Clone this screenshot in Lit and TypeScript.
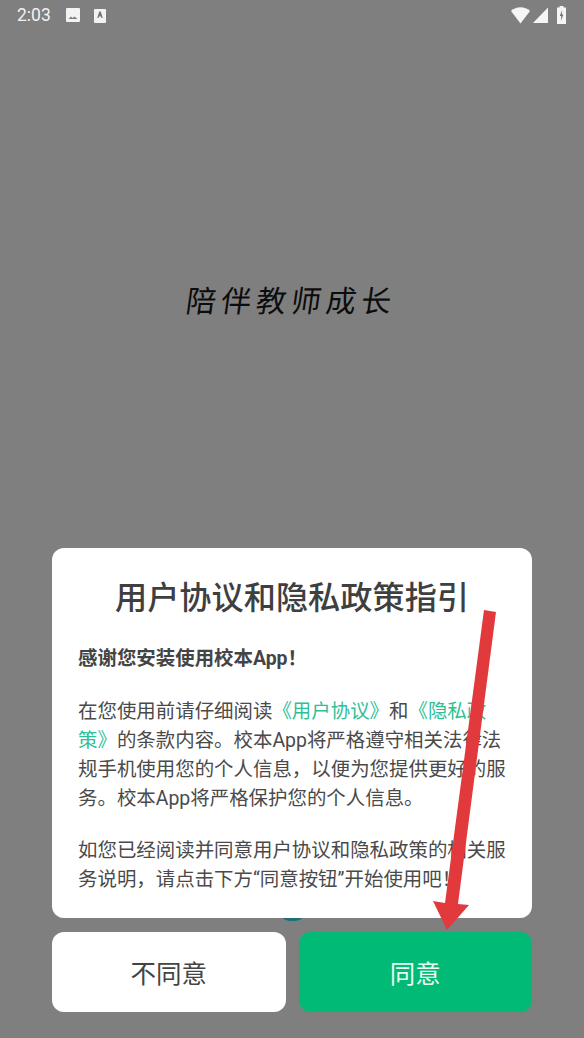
import { LitElement, html, css } from "lit";
import { customElement } from "lit/decorators.js";

@customElement("app-root")
export class AppRoot extends LitElement {
  static styles = css`
    :host {
      display: block;
      position: relative;
      width: 584px;
      height: 1038px;
      overflow: hidden;
      background: #7f7f7f;
      font-family: Roboto, "Noto Sans CJK SC", sans-serif;
      color: #444;
    }
    .status {
      height: 32px;
      display: flex;
      align-items: center;
      padding: 0 18px 2px 17px;
      color: #f2f2f2;
      box-sizing: border-box;
    }
    .time { font-size: 17.5px; width: 49px; }
    .status svg { display: block; }
    .ic2 { margin-left: 14px; }
    .spacer { flex: 1; }
    .sig { margin-left: 3px; }
    .batt { margin-left: 9px; }
    .slogan {
      margin-top: 246px;
      height: 42px;
      display: flex;
      justify-content: center;
      align-items: center;
      gap: 5px;
      padding-right: 6px;
      font-size: 30px;
      font-weight: 400;
      color: #0c0c0c;
      transform: skewX(-8deg);
      font-family: "Noto Sans CJK SC", sans-serif;
      line-height: 42px;
    }
    .dialog {
      position: relative;
      margin: 228px 52px 0;
    }
    .blob {
      position: absolute;
      left: 226px;
      top: 360px;
      width: 29px;
      height: 13px;
      border-radius: 0 0 14px 14px;
      background: #1c6f72;
    }
    .card {
      position: relative;
      height: 370px;
      box-sizing: border-box;
      background: #fff;
      border-radius: 12px;
      padding: 27px 24px 0 26px;
    }
    h1 {
      margin: 0 0 23px;
      text-align: center;
      font-size: 32.2px;
      line-height: 46px;
      font-weight: 500;
      color: #3f3f3f;
      transform: translateX(-1px);
    }
    p {
      margin: 0 0 23.5px;
      font-size: 19.45px;
      line-height: 29px;
      color: #4a4a4a;
    }
    .lead { font-weight: 700; color: #444; }
    .link { color: #2fbf97; }
    .actions {
      display: grid;
      grid-template-columns: 1fr 1fr;
      gap: 13px;
      margin-top: 14px;
    }
    .btn {
      height: 80px;
      border-radius: 12px;
      display: flex;
      align-items: center;
      justify-content: center;
      padding-bottom: 2px;
      box-sizing: border-box;
      font-size: 25.5px;
      background: #fff;
      color: #444;
    }
    .btn.ok { background: #00ba75; color: #e9fbf3; }
    .arrow { position: absolute; left: 0; top: 0; pointer-events: none; }
  `;

  render() {
    return html`
      <div class="status">
        <span class="time">2:03</span>
        <svg width="14" height="16" viewBox="0 0 14 16">
          <rect y="1" width="14" height="14" rx="1" fill="#f2f2f2"></rect>
          <path d="M2.5 12 L5 9.5 L6.5 11 L8.5 9.5 L11.5 12 Z" fill="#7f7f7f"></path>
        </svg>
        <svg class="ic2" width="12" height="15" viewBox="0 0 12 15">
          <rect y="1" width="12" height="14" rx="1" fill="#f2f2f2"></rect>
          <path d="M3.2 10 L5.2 3.5 H6.8 L8.8 10 H7.5 L7.1 8.6 H4.9 L4.5 10 Z" fill="#777"></path>
        </svg>
        <span class="spacer"></span>
        <svg width="19" height="17" viewBox="0 0 19 17">
          <path d="M0 4 C5 -1 14 -1 19 4 L9.5 16.5 Z" fill="#f5f5f5"></path>
        </svg>
        <svg class="sig" width="15" height="16" viewBox="0 0 15 16">
          <path d="M0 16 L15 0.5 V16 Z" fill="#f5f5f5"></path>
        </svg>
        <svg class="batt" width="9" height="18" viewBox="0 0 9 18">
          <path d="M2.5 0 H6.5 V1.5 H9 V18 H0 V1.5 H2.5 Z" fill="#f5f5f5"></path>
          <path d="M5.2 4 L2.8 10 H4.3 L3.8 15 L6.4 8.4 H4.8 Z" fill="#6e6e6e"></path>
        </svg>
      </div>

      <div class="slogan">
        <span>陪</span><span>伴</span><span>教</span><span>师</span><span>成</span><span>长</span>
      </div>

      <div class="dialog">
        <div class="blob"></div>
        <div class="card">
          <h1>用户协议和隐私政策指引</h1>
          <p class="lead">感谢您安装使用校本App！</p>
          <p>在您使用前请仔细阅读<span class="link">《用户协议》</span>和<span class="link">《隐私政策》</span>的条款内容。校本App将严格遵守相关法律法规手机使用您的个人信息，以便为您提供更好的服务。校本App将严格保护您的个人信息。</p>
          <p>如您已经阅读并同意用户协议和隐私政策的相关服务说明，请点击下方“同意按钮”开始使用吧！</p>
        </div>
        <div class="actions">
          <div class="btn">不同意</div>
          <div class="btn ok">同意</div>
        </div>
      </div>

      <svg class="arrow" width="584" height="1038" viewBox="0 0 584 1038">
        <path d="M484 610 L496 612 L458 904 L469 905 L447 930 L433 901 L445 903 Z" fill="#e23a3c"></path>
      </svg>
    `;
  }
}
